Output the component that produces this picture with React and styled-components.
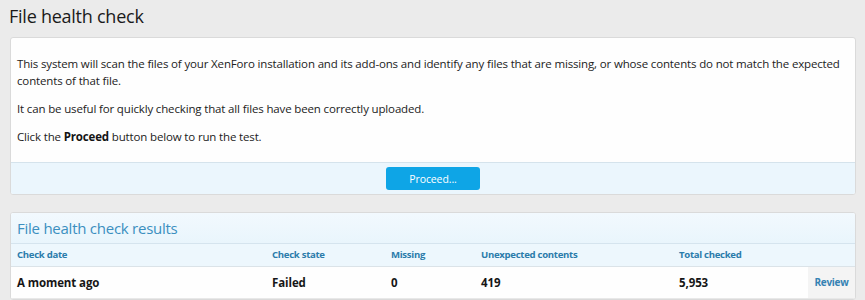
import React from "react";
import styled, { createGlobalStyle } from "styled-components";

const Global = createGlobalStyle`
  html, body { margin: 0; padding: 0; background: #ebebeb; }
  body { font-family: "Open Sans", "Noto Sans", sans-serif; color: #141414; }
  * { box-sizing: border-box; }
`;

const Page = styled.div`
  padding: 0 9px 0 10px;
`;

const Title = styled.h1`
  margin: 0 0 0 -1px;
  padding: 3px 0 0;
  height: 37px;
  font-size: 18px;
  font-weight: 400;
  letter-spacing: -0.25px;
  color: #1a1a1a;
  line-height: 26px;
`;

const Block = styled.div`
  background: #fefefe;
  border: 1px solid #dadada;
  border-radius: 3px;
  overflow: hidden;
  margin-bottom: ${(p) => p.$gap || 0}px;
`;

const Body = styled.div`
  padding: 17px 6px 6px;
  font-size: 11.5px;
  letter-spacing: -0.15px;
  line-height: 17px;
  color: #222;
`;

const Para = styled.p`
  margin: 0 0 11px;
  b { font-weight: 700; color: #141414; }
`;

const Footer = styled.div`
  background: #ebf6fd;
  border-top: 1px solid #d5e3ec;
  display: flex;
  justify-content: center;
  padding: 4px 0;
`;

const Button = styled.button`
  width: 94px;
  height: 23px;
  border: 0;
  border-radius: 3px;
  background: #0ea5e6;
  color: #fff;
  font-family: inherit;
  font-size: 10.5px;
  letter-spacing: -0.1px;
  padding: 0;
`;

const Header = styled.h2`
  margin: 0;
  height: 31px;
  padding: 0 6px;
  font-size: 15px;
  font-weight: 400;
  letter-spacing: -0.25px;
  line-height: 30px;
  color: #3b8fc0;
  background: linear-gradient(to bottom, #f2f9fe, #e9f5fc);
  border-bottom: 1px solid #d5e4ee;
`;

const Table = styled.table`
  width: 100%;
  border-collapse: collapse;
  table-layout: fixed;
`;

const HeadCell = styled.th`
  text-align: left;
  height: 22px;
  padding: 0 6px;
  font-size: 9.6px;
  font-weight: 700;
  letter-spacing: -0.3px;
  color: #2b7cab;
  background: #edf7fd;
  border-bottom: 1px solid #dbe3e8;
`;

const Cell = styled.td`
  height: 32px;
  padding: 0 6px;
  font-size: 11.5px;
  font-weight: 700;
  letter-spacing: -0.1px;
  color: #161616;
  border-bottom: 1px solid #e8e8e8;
  background: ${(p) => (p.$action ? "#f4f4f4" : "#fefefe")};
`;

const ActionLink = styled.a`
  display: block;
  text-align: center;
  color: #3582b3;
  font-size: 10px;
  font-weight: 700;
  letter-spacing: -0.3px;
  text-decoration: none;
`;

const cols = [255, 119, 90, 198, 135, 47];

export default function App() {
  return (
    <Page>
      <Global />
      <Title>File health check</Title>
      <Block $gap={17}>
        <Body>
          <Para>
            This system will scan the files of your XenForo installation and its add-ons and identify any files that are missing, or whose contents do not match the expected contents of that file.
          </Para>
          <Para>It can be useful for quickly checking that all files have been correctly uploaded.</Para>
          <Para>
            Click the <b>Proceed</b> button below to run the test.
          </Para>
        </Body>
        <Footer>
          <Button>Proceed...</Button>
        </Footer>
      </Block>
      <Block>
        <Header>File health check results</Header>
        <Table>
          <colgroup>
            {cols.map((w, i) => (
              <col key={i} style={{ width: w }} />
            ))}
          </colgroup>
          <thead>
            <tr>
              <HeadCell>Check date</HeadCell>
              <HeadCell>Check state</HeadCell>
              <HeadCell>Missing</HeadCell>
              <HeadCell>Unexpected contents</HeadCell>
              <HeadCell>Total checked</HeadCell>
              <HeadCell />
            </tr>
          </thead>
          <tbody>
            <tr>
              <Cell>A moment ago</Cell>
              <Cell>Failed</Cell>
              <Cell>0</Cell>
              <Cell>419</Cell>
              <Cell>5,953</Cell>
              <Cell $action>
                <ActionLink href="#">Review</ActionLink>
              </Cell>
            </tr>
          </tbody>
        </Table>
      </Block>
    </Page>
  );
}
